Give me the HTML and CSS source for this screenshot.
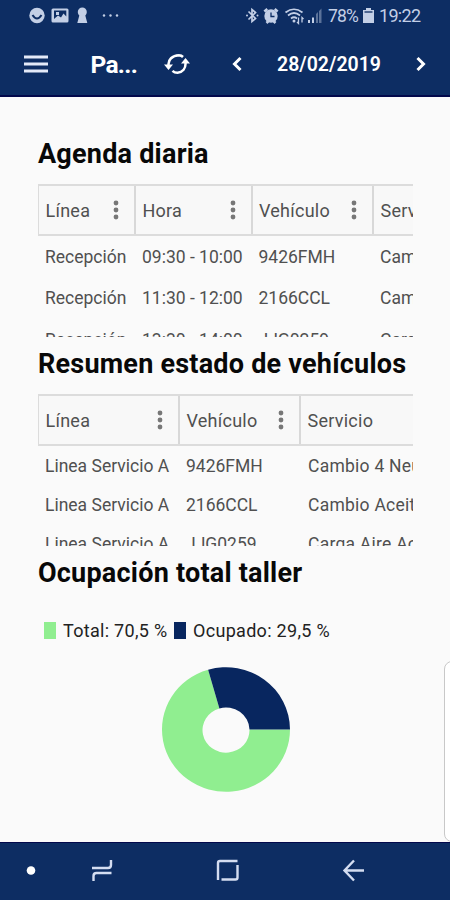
FILE: index.html
```html
<!DOCTYPE html>
<html lang="es">
<head>
<meta charset="utf-8">
<meta name="viewport" content="width=device-width">
<title>Panel</title>
<link rel="stylesheet" href="styles.css">
</head>
<body>
<svg class="defs" width="0" height="0"><symbol id="more" viewBox="0 0 8 20"><circle cx="4" cy="3" r="2.4"/><circle cx="4" cy="10" r="2.4"/><circle cx="4" cy="17" r="2.4"/></symbol></svg>
<header class="top">
  <div class="status">
    <svg class="status-left" width="100" height="20" viewBox="0 0 100 20">
      <circle cx="12" cy="9.500" r="7.700"/><path class="cut" d="M7.500 9q4.500 7 9 0"/>
      <path fill-rule="evenodd" d="M28 2.500h14q1.500 0 1.500 1.500v11q0 1.500-1.500 1.500H28q-1.500 0-1.500-1.500V4Q26.500 2.500 28 2.500zM29 4.500v8.500l4-3.500 3 2 2.500-4 2.800 3V4.500zM31 6h3v3h-3z"/>
      <path d="M52.800 6a4.500 4.500 0 0 1 9 0c0 2-1 3-1.500 3.500l2 7.500h-10l2-7.500c-.5-.5-1.500-1.500-1.500-3.500z"/>
      <circle cx="79" cy="9.500" r="1.200"/><circle cx="85.500" cy="9.500" r="1.200"/><circle cx="92" cy="9.500" r="1.200"/>
    </svg>
    <div class="status-right">
      <svg width="80" height="20" viewBox="0 0 80 20">
        <path class="line" d="M4.500 5.500l7 7-3.500 3V3.500l3.500 3-7 7"/><circle cx="3" cy="9.500" r="1"/><circle cx="13.500" cy="9.500" r="1"/>
        <circle cx="27" cy="10" r="6.700"/><path class="thick" d="M20.300 5.500l3-2.500M33.700 5.500l-3-2.500M22.500 17l2-2M31.500 17l-2-2"/><path class="cut thin" d="M27 6.500v4h3.500"/>
        <path class="line" d="M41.500 6.500q8.500-6.500 17 0M44 9.500q6-5 12 0M47 12.500q3-2.500 6 0"/><circle cx="50" cy="15" r="1.500"/><path class="thin-line" d="M54.500 11.500v6L53 16M58 16.500v-5l1.500 1.500"/>
        <path d="M64 14h2v3h-2zM68 11.500h2V17h-2z"/><path class="dim" d="M72 8l2-2v11h-2zM75 5l2.500-2.500V17H75z"/>
      </svg>
      <span class="percent">78%</span>
      <svg class="battery" width="11" height="17" viewBox="0 0 11 17"><path d="M3 1h5v2h3v13H0V3h3z"/><path class="cut thin" d="M1.500 5h8"/></svg>
      <span class="clock">19:22</span>
    </div>
  </div>
  <div class="bar">
    <svg class="menu" width="24" height="18" viewBox="0 0 24 18"><path d="M0 2h24M0 9h24M0 16h24"/></svg>
    <span class="title">Pa...</span>
    <svg class="sync" width="26" height="22" viewBox="0 0 26 22"><path class="arc" d="M4.500 12.500V11c0-4 3.200-8.500 10.500-8.700M8.500 17.800c1.500 1.500 3 1.900 5 1.900 5.500-.5 8-4.700 8-8.700V9.500M15 2.300c1.500.1 3 .7 4 1.700"/><path d="M0 11.500h9L4.500 17zM17 10.500h9L21.500 5z"/></svg>
    <svg class="prev" width="10" height="16" viewBox="0 0 10 16"><path d="M8.500 2L2.500 8l6 6"/></svg>
    <span class="date">28/02/2019</span>
    <svg class="next" width="10" height="16" viewBox="0 0 10 16"><path d="M1.500 2l6 6-6 6"/></svg>
  </div>
</header>
<main class="content">
  <h2 class="h-agenda">Agenda diaria</h2>
  <section class="grid agenda">
    <div class="row head"><div>Línea<svg><use href="#more"/></svg></div><div>Hora<svg><use href="#more"/></svg></div><div>Vehículo<svg><use href="#more"/></svg></div><div>Servicio</div></div>
    <div class="row"><div>Recepción</div><div>09:30 - 10:00</div><div>9426FMH</div><div>Cambio</div></div>
    <div class="row"><div>Recepción</div><div>11:30 - 12:00</div><div>2166CCL</div><div>Cambio</div></div>
    <div class="row"><div>Recepción</div><div>13:30 - 14:00</div><div>JJG0259</div><div>Carga</div></div>
  </section>
  <h2 class="h-resumen">Resumen estado de vehículos</h2>
  <section class="grid resumen">
    <div class="row head"><div>Línea<svg><use href="#more"/></svg></div><div>Vehículo<svg><use href="#more"/></svg></div><div>Servicio</div></div>
    <div class="row"><div>Linea Servicio A</div><div>9426FMH</div><div class="service">Cambio 4 Neumáticos</div></div>
    <div class="row"><div>Linea Servicio A</div><div>2166CCL</div><div class="service">Cambio Aceite</div></div>
    <div class="row"><div>Linea Servicio A</div><div>JJG0259</div><div class="service">Carga Aire Acond.</div></div>
  </section>
  <h2 class="h-ocupacion">Ocupación total taller</h2>
  <div class="legend"><i class="total"></i><span class="l1">Total: 70,5 %</span><i class="busy"></i><span class="l2">Ocupado: 29,5 %</span></div>
  <svg class="donut" width="130" height="126" viewBox="0 0 130 126">
    <path class="green" d="M129 62.500A64 62.300 0 1 1 47.100 2.700L58.400 41.400A23.500 22.600 0 1 0 88.500 62.500z"/>
    <path class="blue" d="M129 62.500A64 62.300 0 0 0 47.100 2.700L58.400 41.400A23.500 22.600 0 0 1 88.500 62.500z"/>
  </svg>
  <div class="edge"></div>
</main>
<nav class="nav">
  <svg width="450" height="58" viewBox="0 0 450 58">
    <circle cx="31" cy="27.500" r="4.300"/>
    <path d="M92 25h16q3 0 3-3v-5M111.500 30h-15q-3 0-3 3v5"/>
    <path d="M237.500 18h-17.500q-2 0-2 2v17M221.500 36.500h14q2 0 2-2V22"/>
    <path d="M364 27.500h-19M354 17.500l-9.500 10 9.500 10"/>
  </svg>
</nav>
</body>
</html>
```

FILE: styles.css
```css
* { box-sizing: border-box; }
body { margin: 0; width: 450px; height: 900px; display: flex; flex-direction: column; overflow: hidden; background: #fafafa; font-family: Roboto, "Liberation Sans", sans-serif; }
svg { display: block; flex: none; }
.defs { position: absolute; }

.top { height: 97px; flex: none; background: #0d2d63; border-bottom: 2px solid #02084b; color: #fff; }
.status { height: 32px; display: flex; justify-content: space-between; padding: 6px 29px 0 25px; color: #c3cfe6; fill: #c3cfe6; }
.status-right { display: flex; line-height: 20px; font-size: 18px; white-space: nowrap; }
.percent { width: 31px; margin-left: 4px; font-size: 17.500px; letter-spacing: -.8px; }
.battery { margin: 1px 5px 0 4px; }
.clock { width: 42px; letter-spacing: -.7px; }
.cut { fill: none; stroke: #0d2d63; stroke-width: 2; }
.thin { stroke-width: 1.300; }
.line { fill: none; stroke: #c3cfe6; stroke-width: 1.700; }
.thin-line { fill: none; stroke: #c3cfe6; stroke-width: 1.300; }
.thick { stroke: #c3cfe6; stroke-width: 2.500; }
.dim { fill: #5b7299; }
.bar { height: 63px; display: flex; align-items: center; padding-left: 23.500px; fill: none; stroke: #fff; stroke-width: 3; }
.bar span { stroke: none; }
.title { width: 47px; margin: 2px 0 0 43px; font-size: 24.500px; font-weight: 700; letter-spacing: -.7px; white-space: nowrap; }
.menu { stroke: #e3e9f8; }
.sync { margin-left: 26px; }
.sync path { fill: #fff; stroke: none; }
.sync .arc { fill: none; stroke: #fff; stroke-width: 2.500; }
.prev { margin-left: 42px; }
.date { width: 104px; margin: 1px 0 0 35.500px; font-size: 19.500px; font-weight: 600; white-space: nowrap; }
.next { margin-left: 34.500px; }

.content { height: 745px; flex: none; padding-left: 38px; overflow: hidden; position: relative; }
h2 { margin: 0; height: 32px; line-height: 32px; font-size: 27px; font-weight: 700; letter-spacing: .22px; color: #080808; white-space: nowrap; }
.h-agenda { margin-top: 41px; }
.grid { width: 375px; overflow: hidden; color: #505050; font-size: 17.500px; white-space: nowrap; }
.agenda { height: 153px; margin-top: 14px; }
.resumen { height: 152px; margin-top: 14px; }
.h-resumen { margin-top: 11px; }
.h-ocupacion { margin-top: 11px; }
.row { display: grid; height: 41.500px; align-items: center; }
.agenda .row { grid-template-columns: 97px 116.500px 121.500px 120px; }
.resumen .row { grid-template-columns: 141px 121px 200px; height: 39px; }
.row > div { padding-left: 7px; }
.row.head, .resumen .row.head { height: 52px; border: solid #dcdcdc; border-width: 2px 0 2px 1px; background: #f8f8f8; font-size: 18px; letter-spacing: .25px; }
.head > div { display: flex; align-items: center; justify-content: space-between; height: 100%; padding: 0 14px 0 6px; border-right: 2px solid #d8d8d8; }
.row.head > div { padding-left: 6.500px; }
.head svg { width: 8px; height: 20px; fill: #777; }
.row .service { padding-left: 8px; letter-spacing: .25px; }

.legend { height: 20px; margin: 31px 0 0 6px; display: flex; align-items: center; font-size: 18px; letter-spacing: .3px; color: #222; white-space: nowrap; }
.legend i { width: 12px; height: 17px; }
.total { background: #90ee90; }
.busy { background: #08265f; }
.l1 { width: 105px; margin: 0 6px 0 7px; }
.l2 { margin-left: 7px; }
.donut { margin: 27px 0 0 122.500px; }
.green { fill: #90ee90; }
.blue { fill: #08265f; }
.edge { position: absolute; left: 444px; top: 564px; width: 20px; height: 181px; border: 1.500px solid #c8c8c8; border-radius: 8px; background: #fff; }

.nav { height: 58px; background: #0d2d63; border-top: 1px solid #02084b; }
.nav path { fill: none; stroke: #d4ddf1; stroke-width: 2.400; }
.nav circle { fill: #fff; }
```
